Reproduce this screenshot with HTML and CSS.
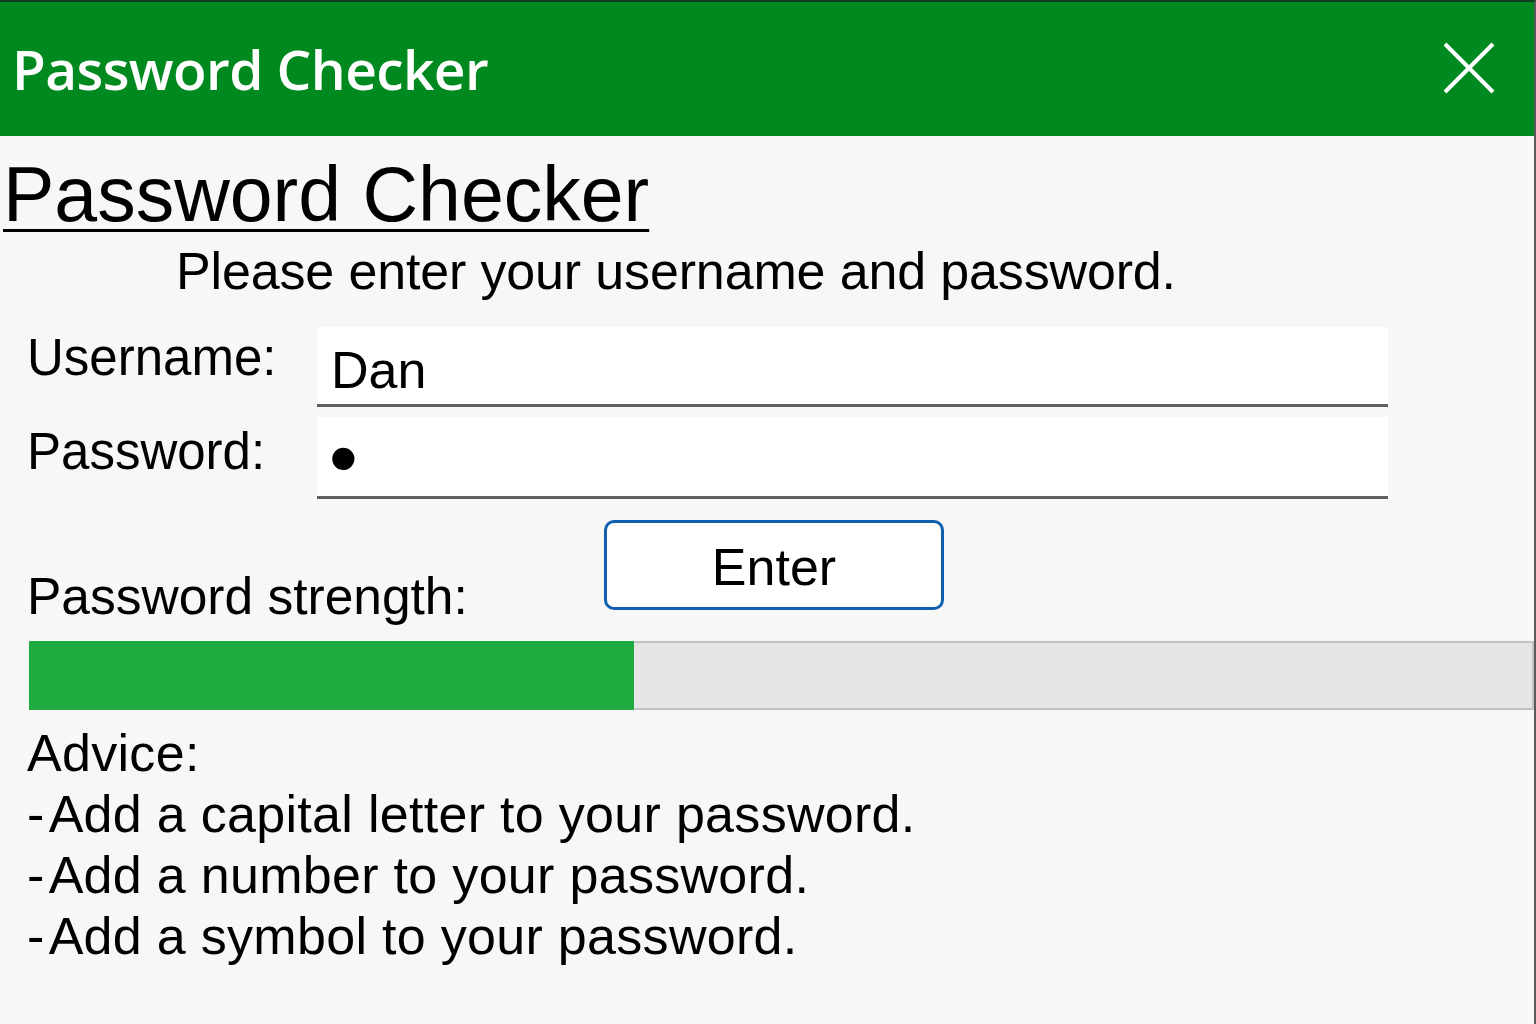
FILE: index.html
```html
<!DOCTYPE html>
<html lang="en">
<head>
<meta charset="utf-8">
<title>Password Checker</title>
<link rel="stylesheet" href="styles.css">
</head>
<body>
<div class="window">
  <header class="titlebar">
    <span class="titlebar-text">Password Checker</span>
    <svg class="close" width="52" height="52" viewBox="0 0 52 52" aria-label="Close">
      <path d="M2 2 L50 50 M50 2 L2 50" stroke="#ffffff" stroke-width="4" fill="none"/>
    </svg>
  </header>
  <main class="content">
    <h1 class="heading">Password Checker</h1>
    <p class="subtitle">Please enter your username and password.</p>
    <div class="form">
      <div class="label label-user">Username:</div>
      <div class="field field-user"><span>Dan</span></div>
      <div class="label label-pass">Password:</div>
      <div class="field field-pass"><span class="bullet">•</span></div>
    </div>
    <div class="strength-row">
      <div class="strength-label">Password strength:</div>
      <button class="enter">Enter</button>
    </div>
    <div class="bar"><div class="bar-fill" style="width:605px"></div></div>
    <div class="advice">
      <div>Advice:</div>
      <div><span class="dash">-</span>Add a capital letter to your password.</div>
      <div><span class="dash">-</span>Add a number to your password.</div>
      <div><span class="dash">-</span>Add a symbol to your password.</div>
    </div>
  </main>
</div>
</body>
</html>
```
FILE: styles.css
```css
html, body {
  margin: 0;
  padding: 0;
  background: #f7f7f7;
}
body {
  width: 1536px;
  height: 1024px;
  overflow: hidden;
  font-family: "Liberation Sans", Arial, sans-serif;
  color: #000;
}
.window {
  box-sizing: border-box;
  width: 1536px;
  height: 1024px;
  border-top: 2px solid #0d3d1c;
  border-right: 2px solid #5a5a5a;
  background: #f7f7f7;
}
.titlebar {
  height: 134px;
  background: #00891f;
  display: flex;
  align-items: center;
  justify-content: space-between;
  padding: 0 39px 0 12px;
}
.titlebar-text {
  font-family: "Open Sans", "Noto Sans", sans-serif;
  font-size: 55px;
  font-weight: 600;
  letter-spacing: -0.6px;
  color: #ffffff;
  line-height: 1;
  margin-top: -2px;
}
.close {
  display: block;
  margin-top: -2px;
}
.content {
  display: flex;
  flex-direction: column;
}
.heading {
  margin: 20px 0 0 3px;
  font-size: 77px;
  font-weight: normal;
  line-height: 1;
  align-self: flex-start;
  text-decoration: underline;
  text-decoration-thickness: 3px;
  text-underline-offset: 8px;
}
.subtitle {
  margin: 12px 0 0 176px;
  font-size: 52px;
  line-height: 1;
  letter-spacing: -0.15px;
}
.form {
  display: grid;
  grid-template-columns: 290px 1071px;
  row-gap: 10px;
  margin: 30px 0 0 27px;
}
.label {
  font-size: 51px;
  line-height: 1;
}
.label-user { padding-top: 5px; }
.label-pass { padding-top: 9px; }
.field {
  box-sizing: border-box;
  background: #ffffff;
  border-bottom: 3px solid #606060;
  padding-left: 14px;
  font-size: 52px;
  line-height: 1;
}
.field-user {
  height: 80px;
  padding-top: 17px;
}
.field-pass {
  height: 82px;
  display: flex;
  align-items: center;
}
.bullet {
  font-size: 82px;
  line-height: 1;
  margin-left: -2px;
  margin-top: 2px;
}
.strength-row {
  display: flex;
  align-items: flex-start;
  margin: 21px 0 0 27px;
}
.strength-label {
  width: 577px;
  font-size: 51.5px;
  line-height: 1;
  margin-top: 51px;
}
.enter {
  box-sizing: border-box;
  width: 340px;
  height: 90px;
  background: #ffffff;
  border: 3px solid #0f60ae;
  border-radius: 10px;
  font-family: "Liberation Sans", Arial, sans-serif;
  font-size: 52px;
  line-height: 1;
  color: #000;
  padding: 4px 0 0 0;
}
.bar {
  box-sizing: border-box;
  position: relative;
  margin: 18px 0 0 29px;
  height: 69px;
  background: #e6e6e6;
  border-top: 2px solid #c2c2c2;
  border-bottom: 2px solid #c2c2c2;
  border-right: 2px solid #c2c2c2;
}
.bar-fill {
  position: absolute;
  left: 0;
  top: -2px;
  bottom: -2px;
  background: #1fab3f;
}
.advice {
  margin: 13px 0 0 27px;
  font-size: 52px;
  line-height: 61px;
  letter-spacing: 0.3px;
}
.dash {
  margin-right: 4px;
}
```
